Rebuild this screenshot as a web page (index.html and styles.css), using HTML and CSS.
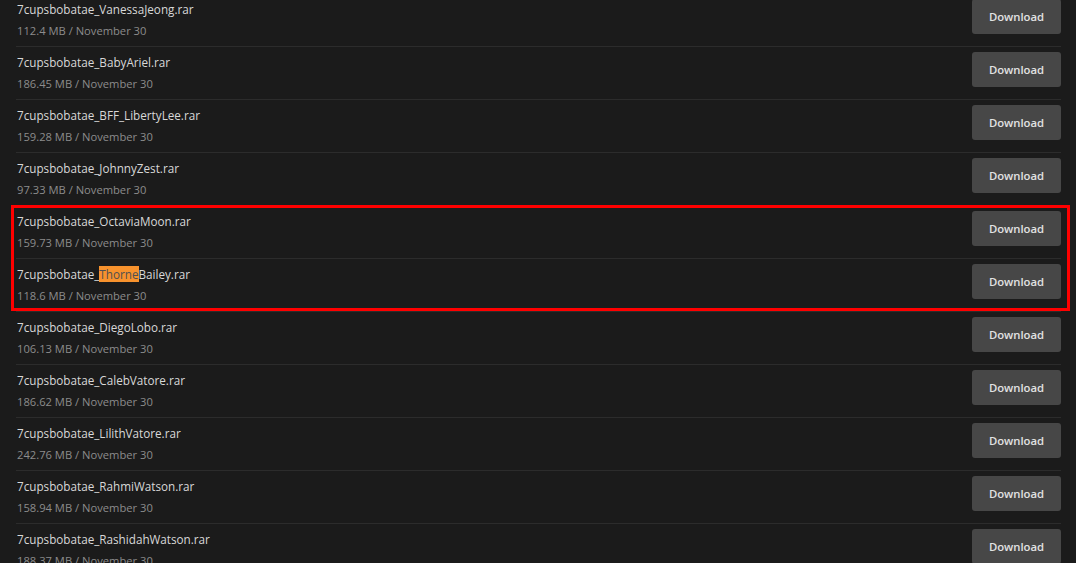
FILE: index.html
```html
<!DOCTYPE html>
<html>
<head>
<meta charset="utf-8">
<link rel="stylesheet" href="styles.css">
</head>
<body>
<div class="page">
  <ul class="files">
    <li class="file"><div class="info"><div class="name">7cupsbobatae_VanessaJeong.rar</div><div class="meta">112.4 MB / November 30</div></div><button class="dl">Download</button></li>
    <li class="file"><div class="info"><div class="name">7cupsbobatae_BabyAriel.rar</div><div class="meta">186.45 MB / November 30</div></div><button class="dl">Download</button></li>
    <li class="file"><div class="info"><div class="name">7cupsbobatae_BFF_LibertyLee.rar</div><div class="meta">159.28 MB / November 30</div></div><button class="dl">Download</button></li>
    <li class="file"><div class="info"><div class="name">7cupsbobatae_JohnnyZest.rar</div><div class="meta">97.33 MB / November 30</div></div><button class="dl">Download</button></li>
    <li class="file"><div class="info"><div class="name">7cupsbobatae_OctaviaMoon.rar</div><div class="meta">159.73 MB / November 30</div></div><button class="dl">Download</button></li>
    <li class="file"><div class="info"><div class="name">7cupsbobatae_<mark class="hit">Thorne</mark>Bailey.rar</div><div class="meta">118.6 MB / November 30</div></div><button class="dl">Download</button></li>
    <li class="file"><div class="info"><div class="name">7cupsbobatae_DiegoLobo.rar</div><div class="meta">106.13 MB / November 30</div></div><button class="dl">Download</button></li>
    <li class="file"><div class="info"><div class="name">7cupsbobatae_CalebVatore.rar</div><div class="meta">186.62 MB / November 30</div></div><button class="dl">Download</button></li>
    <li class="file"><div class="info"><div class="name">7cupsbobatae_LilithVatore.rar</div><div class="meta">242.76 MB / November 30</div></div><button class="dl">Download</button></li>
    <li class="file"><div class="info"><div class="name">7cupsbobatae_RahmiWatson.rar</div><div class="meta">158.94 MB / November 30</div></div><button class="dl">Download</button></li>
    <li class="file"><div class="info"><div class="name">7cupsbobatae_RashidahWatson.rar</div><div class="meta">188.37 MB / November 30</div></div><button class="dl">Download</button></li>
  </ul>
  <div class="annot"></div>
</div>
</body>
</html>
```
FILE: styles.css
```css
html, body {
  margin: 0;
  padding: 0;
  background: #1b1b1b;
  overflow: hidden;
}
.page {
  position: relative;
  width: 1076px;
  height: 563px;
  overflow: hidden;
  font-family: "Open Sans", "Noto Sans", sans-serif;
}
.files {
  list-style: none;
  margin: -6px 15px 0 16px;
  padding: 0;
}
.file {
  display: flex;
  justify-content: space-between;
  align-items: flex-start;
  padding: 5px 0 0 1px;
  height: 47px;
  border-bottom: 1px solid #2c2c2c;
}
.info {
  display: flex;
  flex-direction: column;
}
.name {
  font-size: 11.7px;
  line-height: 21px;
  color: #d8d8d8;
}
.meta {
  font-size: 11.2px;
  line-height: 21px;
  color: #8c8c8c;
}
.hit {
  background: #f7922d;
  color: #505050;
  padding: 0;
}
.dl {
  width: 89px;
  height: 35px;
  border: none;
  border-radius: 3px;
  background: #474747;
  color: #e2e2e2;
  font-family: "Open Sans", "Noto Sans", sans-serif;
  font-weight: 600;
  font-size: 11.3px;
  padding: 0;
}
.annot {
  position: absolute;
  left: 11px;
  top: 205px;
  width: 1053px;
  height: 100px;
  border: 3px solid #ff0000;
}
```
